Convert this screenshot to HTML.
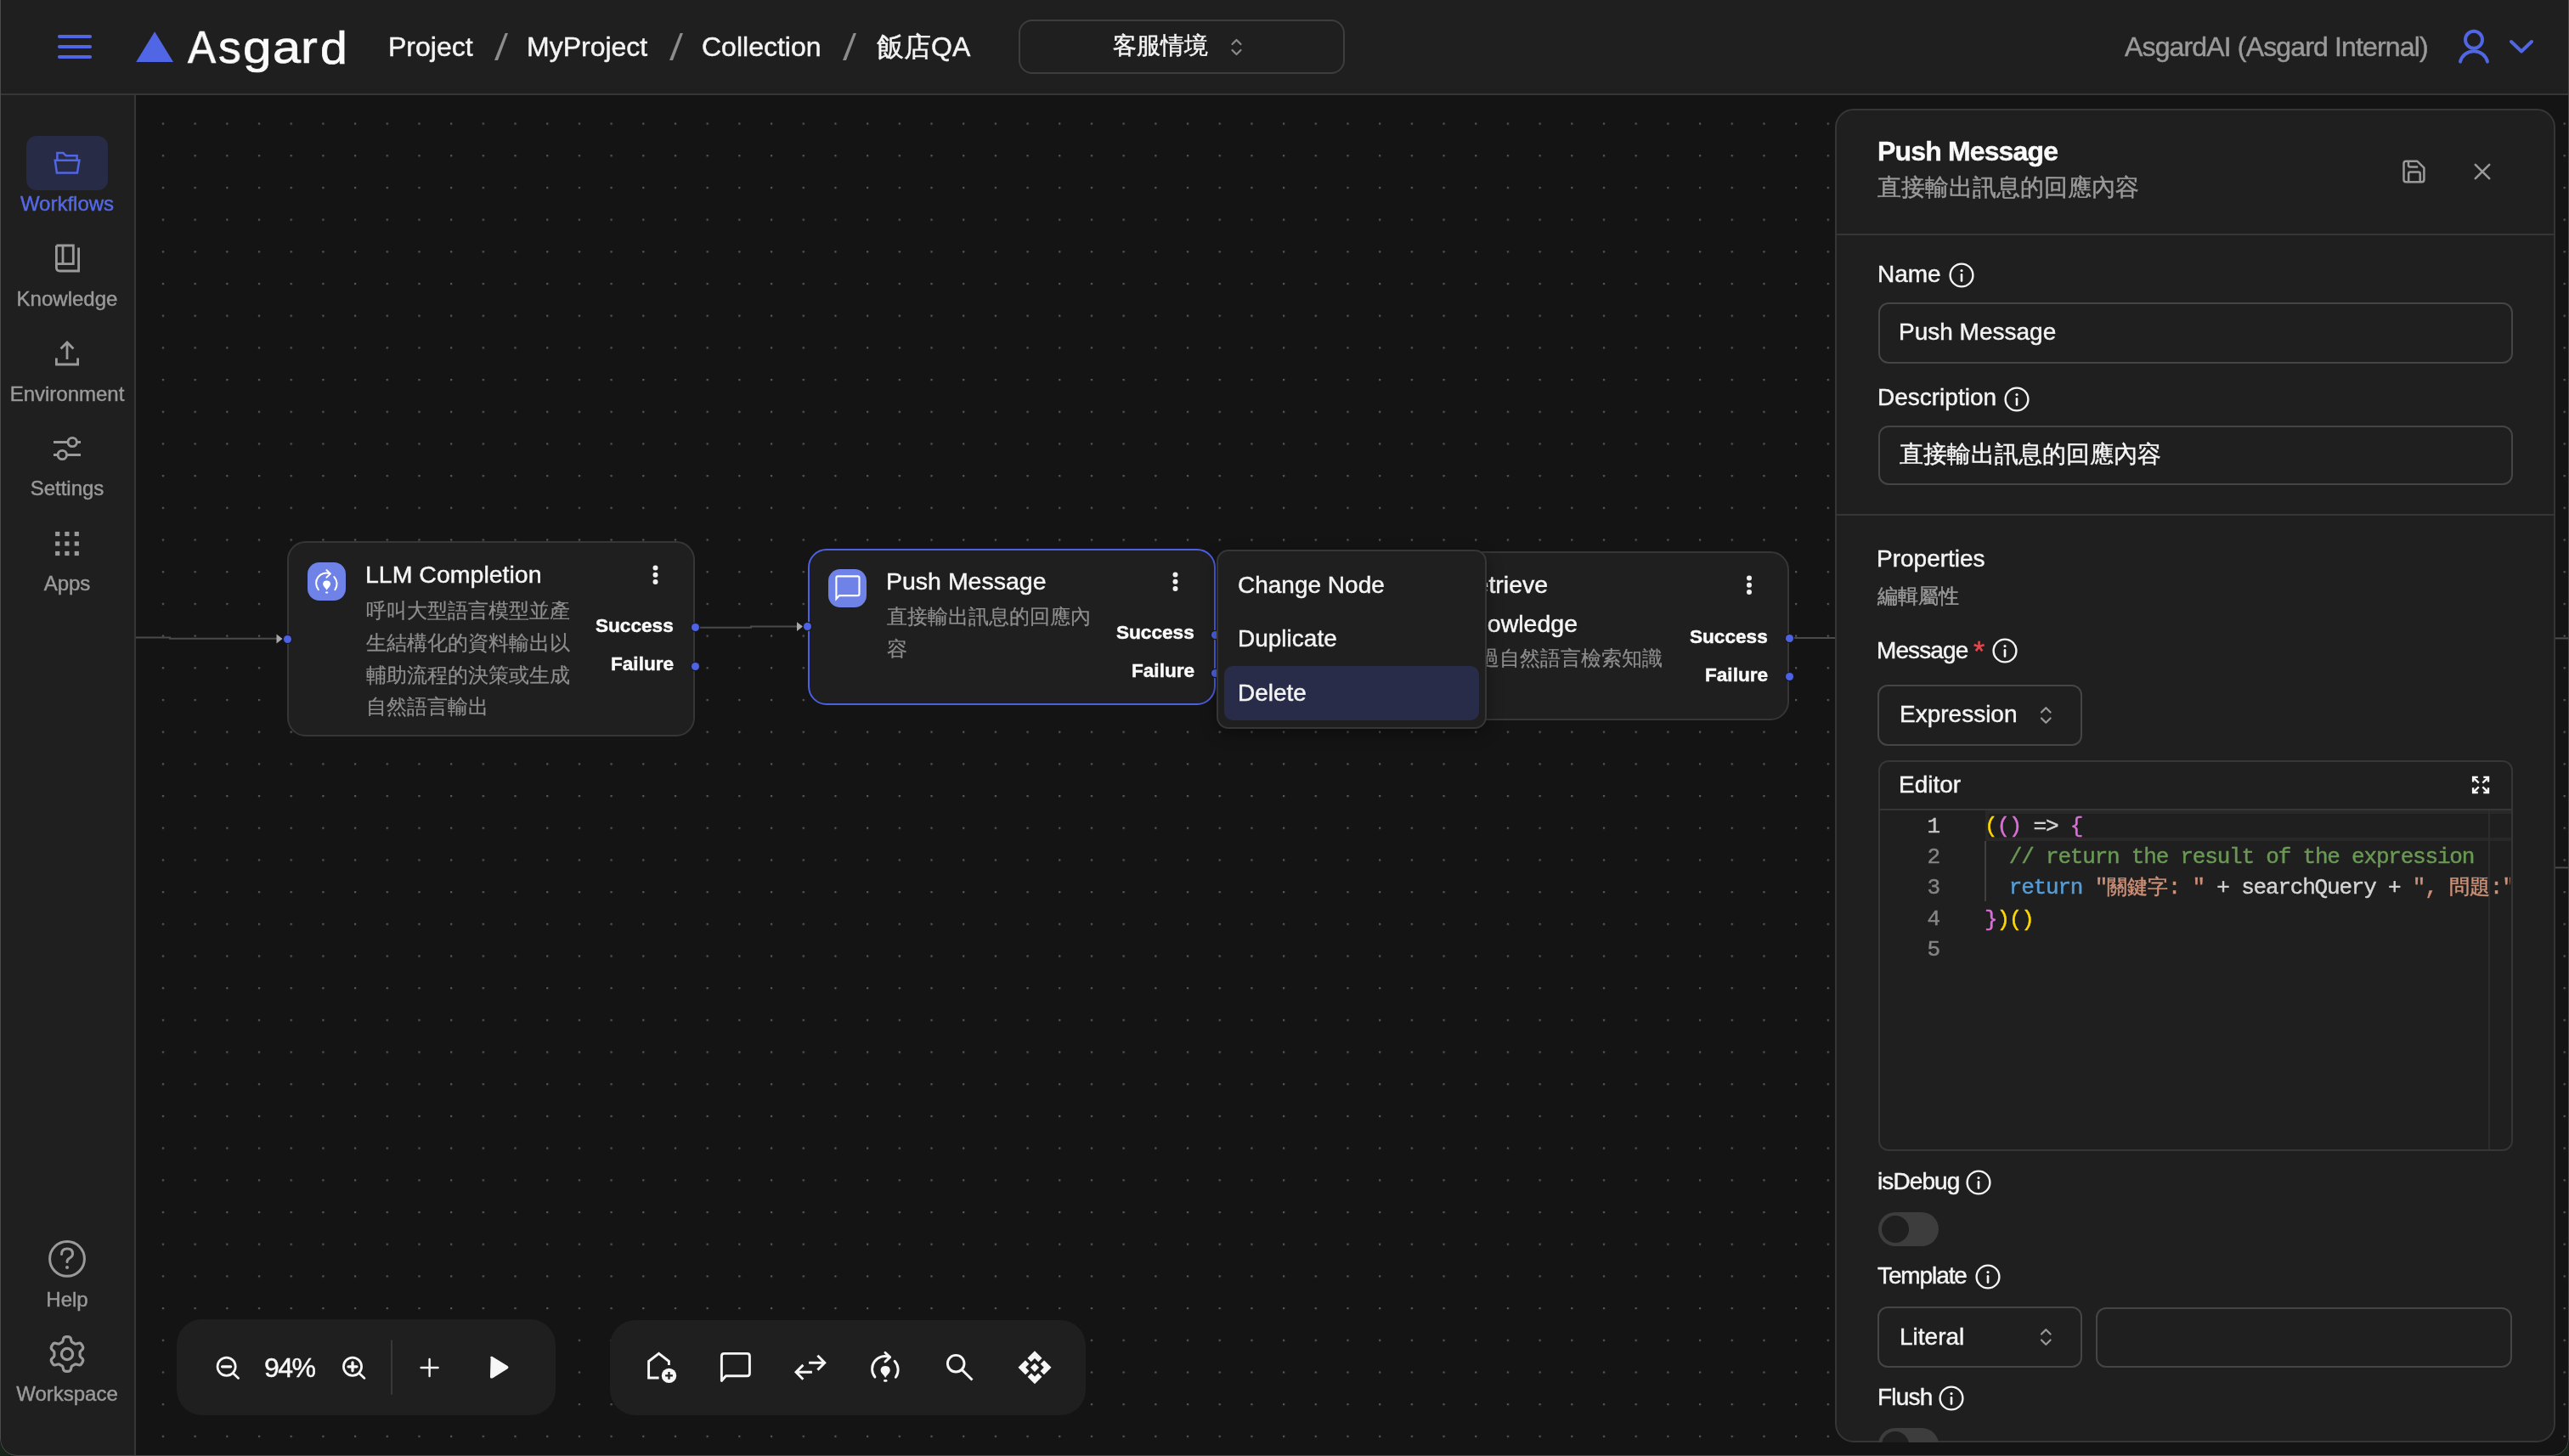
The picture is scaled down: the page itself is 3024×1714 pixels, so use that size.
<!DOCTYPE html>
<html><head><meta charset="utf-8">
<style>
html,body{margin:0;padding:0;width:3024px;height:1714px;overflow:hidden;background:#16241a;}
body{font-family:"Liberation Sans",sans-serif;color:#f4f4f4;-webkit-text-stroke:0.45px currentColor;}
#win{position:absolute;left:0;top:0;width:3024px;height:1714px;overflow:hidden;background:#141414;border-radius:0 0 20px 20px;}
#frame{position:absolute;left:0;top:-4px;width:3024px;height:1718px;box-sizing:border-box;border:1.6px solid #4a4a4a;border-top:none;border-radius:0 0 20px 20px;pointer-events:none;}
.a{position:absolute;}
.t{position:absolute;white-space:nowrap;line-height:1;will-change:transform;}
svg{position:absolute;overflow:visible;}
.hdr{left:0;top:0;width:3024px;height:110px;background:#1f1f1f;border-bottom:2px solid #363636;}
.side{left:0;top:112px;width:158px;height:1602px;background:#1f1f1f;border-right:2px solid #363636;}
.sl{font-size:24px;color:#9a9a9a;width:158px;text-align:center;left:0;}
.node{position:absolute;background:#1f1f1f;border:2px solid #363636;border-radius:22px;box-sizing:border-box;}
.nicon{position:absolute;width:46px;height:46px;border-radius:13px;background:#6b7fe6;}
.ntitle{font-size:28.5px;color:#f6f6f6;}
.ndesc{font-size:24.44px;color:#8e8e8e;line-height:37.8px;-webkit-text-stroke:0.2px #8e8e8e;}
.nout{font-size:22.6px;font-weight:bold;color:#fafafa;text-align:right;}
.hd{position:absolute;width:9px;height:9px;border-radius:50%;background:#4d62e4;box-shadow:0 0 0 1.2px #1a1a1a;}
.lbl{font-size:28px;color:#f4f4f4;}
.inp{position:absolute;box-sizing:border-box;border:2px solid #454545;border-radius:12px;background:#1f1f1f;}
.cj{font-size:24px;letter-spacing:-0.1px;}
.code{font-family:"Liberation Mono",monospace;font-size:26px;letter-spacing:-1.2px;line-height:1;will-change:transform;}
</style></head><body>
<div id="win">

<!-- canvas dots -->
<svg class="a" style="left:0;top:0" width="3024" height="1714">
<defs><pattern id="dots" x="2.4" y="31.43" width="37.69" height="37.69" patternUnits="userSpaceOnUse"><rect x="0" y="0" width="2.2" height="2.2" fill="#575757"/></pattern></defs>
<rect x="160" y="112" width="2864" height="1602" fill="url(#dots)"/>
</svg>

<!-- HEADER -->
<div class="a hdr"></div>
<svg style="left:0;top:0" width="420" height="110">
  <g stroke="#5166e4" stroke-width="4.2" stroke-linecap="round">
    <line x1="70" y1="43" x2="106" y2="43"/><line x1="70" y1="55" x2="106" y2="55"/><line x1="70" y1="67" x2="106" y2="67"/>
  </g>
  <polygon points="182.1,37.3 204,72.9 160.2,72.9" fill="#5166e4"/>
</svg>
<div class="t" style="left:221.2px;top:28px;font-size:54px;color:#fafafa;transform:scaleX(0.92);transform-origin:0 0;-webkit-text-stroke:0.7px #fafafa;">A</div><div class="t" style="left:256.5px;top:28px;font-size:54px;color:#fafafa;transform:scaleX(0.99);transform-origin:0 0;-webkit-text-stroke:0.7px #fafafa;">s</div><div class="t" style="left:285.6px;top:28px;font-size:54px;color:#fafafa;transform:scaleX(1.12);transform-origin:0 0;-webkit-text-stroke:0.7px #fafafa;">g</div><div class="t" style="left:321.2px;top:28px;font-size:54px;color:#fafafa;transform:scaleX(1.1);transform-origin:0 0;-webkit-text-stroke:0.7px #fafafa;">a</div><div class="t" style="left:354px;top:28px;font-size:54px;color:#fafafa;transform:scaleX(1.1);transform-origin:0 0;-webkit-text-stroke:0.7px #fafafa;">r</div><div class="t" style="left:376.7px;top:29.5px;font-size:53px;color:#fafafa;transform:scaleX(1.08);transform-origin:0 0;-webkit-text-stroke:0.7px #fafafa;">d</div>

<div class="t" style="left:457px;top:39px;font-size:32px;">Project</div>

<div class="t" style="left:620px;top:39px;font-size:32px;">MyProject</div>
<svg style="left:0;top:0" width="1100" height="100"><polygon points="594.6,39.1 598,39.1 586,70.9 582,70.9" fill="#8c8c8c"/><polygon points="800.6,39.1 804,39.1 792,70.9 788,70.9" fill="#8c8c8c"/><polygon points="1004.6,39.1 1008,39.1 996,70.9 992,70.9" fill="#8c8c8c"/></svg>

<div class="t" style="left:826px;top:39px;font-size:32px;">Collection</div>

<div class="t" style="left:1032px;top:39px;font-size:32px;">飯店QA</div>

<div class="inp" style="left:1199px;top:23px;width:384px;height:64px;border-radius:16px;border-color:#3d3d3d;"></div>
<div class="t" style="left:1310px;top:40px;font-size:28px;">客服情境</div>
<svg style="left:1449px;top:45px" width="13" height="21"><path d="M1.5 7 L6.5 2 L11.5 7 M1.5 14 L6.5 19 L11.5 14" fill="none" stroke="#8a8a8a" stroke-width="2.2" stroke-linecap="round" stroke-linejoin="round"/></svg>

<div class="t" style="left:2500.5px;top:39px;font-size:32px;color:#9a9a9a;letter-spacing:-0.85px;">AsgardAI (Asgard Internal)</div>
<svg style="left:2880px;top:20px" width="120" height="70">
  <g fill="none" stroke="#5166e4" stroke-width="4" stroke-linecap="round">
    <circle cx="32" cy="26.8" r="10"/>
    <path d="M16 52.6 A16.5 16.5 0 0 1 48 52.6" />
    <path d="M76 29 L88 40.5 L100 29" stroke-linejoin="round"/>
  </g>
</svg>

<!-- SIDEBAR -->
<div class="a side"></div>
<div class="a" style="left:31px;top:160px;width:96px;height:64px;border-radius:12px;background:#272b45;"></div>
<div class="t sl" style="top:227.6px;color:#5468e7;">Workflows</div>
<div class="t sl" style="top:339.7px;">Knowledge</div>
<div class="t sl" style="top:451.5px;">Environment</div>
<div class="t sl" style="top:562.7px;">Settings</div>
<div class="t sl" style="top:675.3px;">Apps</div>
<div class="t sl" style="top:1518.4px;">Help</div>
<div class="t sl" style="top:1629.3px;">Workspace</div>

<!-- sidebar icons -->
<svg style="left:0;top:150px" width="158" height="560">
 <g fill="none" stroke="#5166e4" stroke-width="2.5" stroke-linejoin="miter">
  <path d="M67.4 38.7 V30 H74.4 L77.6 33.2 H90.6 V38.7"/>
  <path d="M64.8 38.7 H93.4 L90.9 53.4 H66.9 Z"/>
 </g>
 <g fill="none" stroke="#9a9a9a" stroke-width="2.8">
  <path d="M66.4 139 H86.3 V160.6 H66.4 M74 139.5 V160"/>
  <path d="M66.4 139 V165 Q66.4 169 70.4 169 H92.6 V141.5"/>
  <path d="M79 253.5 V273 M71.6 260.5 L79 253 L86.4 260.5"/>
  <path d="M66.4 271.5 V279 H91.6 V271.5"/>
  <path d="M63 370.5 H95 M63 385.5 H95"/>
 </g>
 <g fill="#1f1f1f" stroke="#9a9a9a" stroke-width="2.8">
  <circle cx="85.2" cy="370.5" r="5.2"/>
  <circle cx="73.3" cy="385.5" r="5.2"/>
 </g>
 <g fill="#9a9a9a">
  <rect x="65.1" y="475.9" width="5.2" height="5.2"/><rect x="76.3" y="475.9" width="5.2" height="5.2"/><rect x="87.7" y="475.9" width="5.2" height="5.2"/>
  <rect x="65.1" y="487.4" width="5.2" height="5.2"/><rect x="76.3" y="487.4" width="5.2" height="5.2"/><rect x="87.7" y="487.4" width="5.2" height="5.2"/>
  <rect x="65.1" y="498.9" width="5.2" height="5.2"/><rect x="76.3" y="498.9" width="5.2" height="5.2"/><rect x="87.7" y="498.9" width="5.2" height="5.2"/>
 </g>
</svg>
<svg style="left:0;top:1440px" width="158" height="200">
 <g fill="none" stroke="#9a9a9a" stroke-width="3">
  <circle cx="79" cy="41.9" r="20.4"/>
  <path d="M72.5 36.5 Q72.5 30 79.2 30 Q85.5 30 85.5 35.8 Q85.5 39.5 81.5 41.3 Q79 42.6 79 45.5" stroke-linecap="round"/>
  <path transform="translate(79 154)" d="M0.00 -20.43 L1.07 -20.39 L2.13 -20.24 L3.15 -19.87 L4.03 -18.95 L4.59 -17.15 L4.98 -15.33 L5.51 -14.36 L6.16 -13.84 L6.85 -13.44 L7.53 -13.05 L8.21 -12.65 L8.91 -12.26 L9.68 -11.96 L10.79 -11.98 L12.55 -12.55 L14.40 -12.97 L15.63 -12.66 L16.46 -11.96 L17.12 -11.12 L17.70 -10.22 L18.19 -9.27 L18.59 -8.28 L18.78 -7.21 L18.43 -5.99 L17.15 -4.59 L15.77 -3.35 L15.20 -2.41 L15.07 -1.58 L15.06 -0.79 L15.07 0.00 L15.06 0.79 L15.07 1.58 L15.20 2.41 L15.77 3.35 L17.15 4.59 L18.43 5.99 L18.78 7.21 L18.59 8.28 L18.19 9.27 L17.70 10.22 L17.12 11.12 L16.46 11.96 L15.63 12.66 L14.40 12.97 L12.55 12.55 L10.79 11.98 L9.68 11.96 L8.91 12.26 L8.21 12.65 L7.53 13.05 L6.85 13.44 L6.16 13.84 L5.51 14.36 L4.98 15.33 L4.59 17.15 L4.03 18.95 L3.15 19.87 L2.13 20.24 L1.07 20.39 L0.00 20.43 L-1.07 20.39 L-2.13 20.24 L-3.15 19.87 L-4.03 18.95 L-4.59 17.15 L-4.98 15.33 L-5.51 14.36 L-6.16 13.84 L-6.85 13.44 L-7.53 13.05 L-8.21 12.65 L-8.91 12.26 L-9.68 11.96 L-10.79 11.98 L-12.55 12.55 L-14.40 12.97 L-15.63 12.66 L-16.46 11.96 L-17.12 11.12 L-17.70 10.22 L-18.19 9.27 L-18.59 8.28 L-18.78 7.21 L-18.43 5.99 L-17.15 4.59 L-15.77 3.35 L-15.20 2.41 L-15.07 1.58 L-15.06 0.79 L-15.07 0.00 L-15.06 -0.79 L-15.07 -1.58 L-15.20 -2.41 L-15.77 -3.35 L-17.15 -4.59 L-18.43 -5.99 L-18.78 -7.21 L-18.59 -8.28 L-18.19 -9.27 L-17.70 -10.22 L-17.12 -11.12 L-16.46 -11.96 L-15.63 -12.66 L-14.40 -12.97 L-12.55 -12.55 L-10.79 -11.98 L-9.68 -11.96 L-8.91 -12.26 L-8.21 -12.65 L-7.53 -13.05 L-6.85 -13.44 L-6.16 -13.84 L-5.51 -14.36 L-4.98 -15.33 L-4.59 -17.15 L-4.03 -18.95 L-3.15 -19.87 L-2.13 -20.24 L-1.07 -20.39Z" stroke-width="3.2" stroke-linejoin="round"/>
  <circle cx="79" cy="154" r="6.6" stroke-width="3.2"/>
 </g>
 <circle cx="79" cy="52" r="2" fill="#9a9a9a"/>
</svg>

<!-- EDGES -->
<svg style="left:0;top:0" width="3024" height="1714">
 <g fill="none" stroke="#4a4a4a" stroke-width="2">
  <path d="M160 750.6 H200 V751.8 H330"/>
  <path d="M818 738.8 H884 V737.6 H944"/>
  <path d="M2106 751 H2170"/>
  <path d="M3000 751.4 H3024"/>
  <path d="M3000 1021.4 H3024"/>
 </g>
 <polygon points="325.5,746.6 332.5,752 325.5,757.4" fill="#a8a8a8"/>
 <polygon points="938,732.3 945,737.6 938,743" fill="#a8a8a8"/>
</svg>

<!-- LLM node -->
<div class="node" style="left:338px;top:637px;width:480px;height:229.5px;"></div>
<div class="nicon" style="left:362.4px;top:661.6px;width:45px;height:45px;border-radius:14px;background:#6f82e8;"></div>
<svg style="left:362.4px;top:661.6px" width="45" height="45">
 <g fill="none" stroke="#fff" stroke-width="2" stroke-linecap="round" stroke-linejoin="round">
  <path d="M12.8 32.1 A12 12 0 0 1 26.6 13.4"/>
  <path d="M22.4 9.1 L26.9 13.4 L22.4 17.7"/>
  <path d="M31.3 17.1 A12 12 0 0 1 32.3 32.3"/>
  <path d="M22 35.6 H23.3"/>
 </g>
 <path d="M22.6 21.6 C26.2 21.6 27.2 24 27 26 C26.8 28.5 23.6 30.4 22.6 32.8 C21.6 30.4 18.4 28.5 18.2 26 C18 24 19 21.6 22.6 21.6 Z" fill="#fff"/>
</svg>
<div class="t ntitle" style="left:430px;top:661.5px;">LLM Completion</div>
<div class="t ndesc" style="left:430.5px;top:699.5px;">呼叫大型語言模型並產<br>生結構化的資料輸出以<br>輔助流程的決策或生成<br>自然語言輸出</div>
<div class="t nout" style="right:2231px;top:726px;">Success</div>
<div class="t nout" style="right:2231px;top:771px;">Failure</div>
<svg style="left:765px;top:660px" width="14" height="32"><g fill="#f0f0f0"><circle cx="6.5" cy="8.5" r="3"/><circle cx="6.5" cy="16.8" r="3"/><circle cx="6.5" cy="25.1" r="3"/></g></svg>
<div class="hd" style="left:333.5px;top:747.5px;"></div>
<div class="hd" style="left:814px;top:734.3px;"></div>
<div class="hd" style="left:814px;top:779.5px;"></div>

<!-- Retrieve knowledge node (behind menu) -->
<div class="node" style="left:1624px;top:649.4px;width:482px;height:199px;"></div>
<div class="t ntitle" style="left:1716px;top:664.5px;line-height:46px;">Retrieve<br>Knowledge</div>
<div class="t ndesc" style="left:1717px;top:756px;">透過自然語言檢索知識</div>
<div class="t nout" style="right:943px;top:738.5px;">Success</div>
<div class="t nout" style="right:943px;top:783.5px;">Failure</div>
<svg style="left:2052px;top:672px" width="14" height="32"><g fill="#f0f0f0"><circle cx="7" cy="8.5" r="3"/><circle cx="7" cy="16.8" r="3"/><circle cx="7" cy="25.1" r="3"/></g></svg>
<div class="hd" style="left:2101.9px;top:746.5px;"></div>
<div class="hd" style="left:2101.9px;top:791.8px;"></div>

<!-- Push Message node (selected) -->
<div class="node" style="left:951px;top:646px;width:479.5px;height:183.5px;border-color:#4b60e2;"></div>
<div class="nicon" style="left:975.2px;top:669.8px;width:45px;height:45px;border-radius:14px;background:#6f82e8;"></div>
<svg style="left:975.2px;top:669.8px" width="45" height="45">
 <path d="M9.4 35 V10.2 Q9.4 8.4 11.2 8.4 H34.6 Q36.5 8.4 36.5 10.2 V29.3 Q36.5 31.1 34.6 31.1 H13 Z" fill="none" stroke="#fff" stroke-width="2.1" stroke-linejoin="miter"/>
</svg>
<div class="t ntitle" style="left:1043px;top:670px;">Push Message</div>
<div class="t ndesc" style="left:1043.5px;top:707px;">直接輸出訊息的回應內<br>容</div>
<div class="t nout" style="right:1618px;top:734px;">Success</div>
<div class="t nout" style="right:1618px;top:779px;">Failure</div>
<svg style="left:1377px;top:668px" width="14" height="32"><g fill="#f0f0f0"><circle cx="6.5" cy="8.5" r="3"/><circle cx="6.5" cy="16.8" r="3"/><circle cx="6.5" cy="25.1" r="3"/></g></svg>
<div class="hd" style="left:946px;top:733px;"></div>
<div class="hd" style="left:1425.5px;top:742.8px;"></div>
<div class="hd" style="left:1425.5px;top:787.6px;"></div>

<!-- context menu -->
<div class="a" style="left:1431.5px;top:646.8px;width:318.5px;height:211px;box-sizing:border-box;border:2px solid #363636;border-radius:14px;background:#1f1f1f;box-shadow:0 6px 18px rgba(0,0,0,0.35);"></div>
<div class="a" style="left:1441px;top:783.8px;width:299.6px;height:63.8px;border-radius:10px;background:#282c48;"></div>
<div class="t lbl" style="left:1456.5px;top:674.5px;">Change Node</div>
<div class="t lbl" style="left:1456.5px;top:738.3px;">Duplicate</div>
<div class="t lbl" style="left:1456.5px;top:802.3px;">Delete</div>

<!-- TOOLBAR 1 -->
<div class="a" style="left:208px;top:1553px;width:446px;height:113px;border-radius:30px;background:#1f1f1f;"></div>
<svg style="left:208px;top:1553px" width="446" height="113">
 <g fill="none" stroke="#f6f6f6" stroke-width="2.7" stroke-linecap="round">
  <circle cx="58.6" cy="55.8" r="10.6"/><path d="M66.8 64 L72.6 69.4"/>
  <circle cx="207" cy="55.8" r="10.6"/><path d="M215.2 64 L221 69.4"/>
  <path d="M53.6 55.8 H63.6 M202 55.8 H212 M207 50.8 V60.8" stroke-width="3.3"/>
  <path d="M287.6 57 H307.6 M297.6 47 V67" stroke-width="2.4"/>
 </g>
 <path d="M253 24.6 V88.8" stroke="#383838" stroke-width="2"/>
 <path d="M370.6 46 Q369.5 44 371.5 45 L388.6 55.5 Q390.4 56.6 388.6 57.7 L371.5 68.3 Q369.5 69.3 370 67 Z" fill="#f6f6f6" stroke="#f6f6f6" stroke-width="2" stroke-linejoin="round"/>
</svg>
<div class="t" style="left:311px;top:1594px;font-size:32px;color:#f8f8f8;letter-spacing:-1.6px;">94%</div>

<!-- TOOLBAR 2 -->
<div class="a" style="left:718px;top:1554px;width:560px;height:112px;border-radius:30px;background:#1f1f1f;"></div>
<svg style="left:0;top:0" width="1300" height="1714">
 <g fill="none" stroke="#f6f6f6" stroke-width="2.9" stroke-linejoin="miter" stroke-linecap="butt">
  <path d="M775.6 1622 H763.6 V1602.5 L775.5 1593.3 L787.4 1602.5 V1607"/>
  <path d="M849.4 1625.5 V1596.4 Q849.4 1593.4 852.4 1593.4 H879.4 Q882.4 1593.4 882.4 1596.4 V1616.7 Q882.4 1619.7 879.4 1619.7 H854.4 Z" stroke-linejoin="round"/>
  <path d="M952.1 1604.2 H971 M962.4 1595.8 L970.8 1604.2 L962.4 1612.6 M955.9 1615.3 H937 M945.4 1606.9 L937 1615.3 L945.4 1623.7"/>
  <circle cx="1125.2" cy="1605.2" r="9.8"/><path d="M1132.4 1612.6 L1144.5 1624.5"/>
 </g>
 <circle cx="787.5" cy="1619.4" r="8.7" fill="#f6f6f6"/>
 <path d="M787.5 1615 V1623.8 M783.1 1619.4 H791.9" stroke="#1f1f1f" stroke-width="2.3"/>
 <g transform="translate(1013.95 1580.9) scale(1.25)">
  <g fill="none" stroke="#f6f6f6" stroke-width="2.3" stroke-linecap="round" stroke-linejoin="round">
   <path d="M12.8 32.1 A12 12 0 0 1 26.6 13.4"/>
   <path d="M22.4 9.1 L26.9 13.4 L22.4 17.7"/>
   <path d="M31.3 17.1 A12 12 0 0 1 32.3 32.3"/>
   <path d="M22 35.6 H23.3"/>
  </g>
  <path d="M22.6 21.6 C26.2 21.6 27.2 24 27 26 C26.8 28.5 23.6 30.4 22.6 32.8 C21.6 30.4 18.4 28.5 18.2 26 C18 24 19 21.6 22.6 21.6 Z" fill="#f6f6f6"/>
 </g>
 <g transform="translate(1218 1609.8) rotate(45)">
  <rect x="-13.8" y="-13.8" width="27.6" height="27.6" fill="#f6f6f6"/>
  <rect x="-7.6" y="-7.6" width="15.2" height="15.2" fill="#1f1f1f"/>
  <rect x="-1.75" y="-15" width="3.5" height="30" fill="#1f1f1f"/>
  <rect x="-15" y="-1.75" width="30" height="3.5" fill="#1f1f1f"/>
  <rect x="-3.6" y="-3.6" width="7.2" height="7.2" fill="#f6f6f6"/>
 </g>
</svg>

<!-- PANEL -->
<div class="a" style="left:2160px;top:128px;width:848px;height:1570px;box-sizing:border-box;border:2px solid #363636;border-radius:22px;background:#1f1f1f;overflow:hidden;">
 <div class="a" style="left:0;top:144.5px;width:848px;height:2px;background:#363636;"></div>
 <div class="a" style="left:0;top:475px;width:848px;height:2px;background:#363636;"></div>
</div>
<div class="t" style="left:2209.5px;top:162.4px;font-size:32px;font-weight:bold;color:#fafafa;letter-spacing:-0.85px;">Push Message</div>
<div class="t" style="left:2210px;top:207px;font-size:28px;color:#9a9a9a;">直接輸出訊息的回應內容</div>
<svg style="left:2810px;top:175px" width="140" height="55">
 <g fill="none" stroke="#9a9a9a" stroke-width="2.5" stroke-linejoin="round">
  <path d="M22.2 14.8 H35.5 L43.4 22.7 V36.5 Q43.4 39.2 40.7 39.2 H22.2 Q19.5 39.2 19.5 36.5 V17.5 Q19.5 14.8 22.2 14.8 Z"/>
  <path d="M25 15.2 V19.5 Q25 21.4 26.9 21.4 H36.2"/>
  <path d="M25.2 38.6 V29.4 Q25.2 27.5 27.1 27.5 H36.8 Q38.7 27.5 38.7 29.4 V38.6"/>
 </g>
 <path d="M103.8 18.8 L120.2 35.2 M120.2 18.8 L103.8 35.2" stroke="#9a9a9a" stroke-width="2.6" stroke-linecap="round"/>
</svg>

<div class="t lbl" style="left:2209.5px;top:309.3px;">Name</div>
<svg style="left:2293px;top:308px" width="32" height="32"><circle cx="16" cy="16" r="13.4" fill="none" stroke="#f4f4f4" stroke-width="2.4"/><path d="M16 15.2 V22.6" stroke="#f4f4f4" stroke-width="2.6" stroke-linecap="round"/><circle cx="16" cy="10.6" r="1.6" fill="#f4f4f4"/></svg>
<div class="inp" style="left:2210.5px;top:356px;width:747px;height:71.5px;"></div>
<div class="t lbl" style="left:2235px;top:377.3px;">Push Message</div>

<div class="t lbl" style="left:2209.5px;top:454.3px;">Description</div>
<svg style="left:2357.8px;top:454px" width="32" height="32"><circle cx="16" cy="16" r="13.4" fill="none" stroke="#f4f4f4" stroke-width="2.4"/><path d="M16 15.2 V22.6" stroke="#f4f4f4" stroke-width="2.6" stroke-linecap="round"/><circle cx="16" cy="10.6" r="1.6" fill="#f4f4f4"/></svg>
<div class="inp" style="left:2210.5px;top:500.5px;width:747px;height:70.5px;"></div>
<div class="t lbl" style="left:2236px;top:521px;">直接輸出訊息的回應內容</div>

<div class="t lbl" style="left:2208.5px;top:643.7px;">Properties</div>
<div class="t" style="left:2209.5px;top:689.5px;font-size:24px;color:#9a9a9a;">編輯屬性</div>

<div class="t lbl" style="left:2208.5px;top:752.3px;letter-spacing:-0.9px;">Message</div>
<div class="t" style="left:2322.5px;top:749px;font-size:34px;color:#e5484d;">*</div>
<svg style="left:2344px;top:750px" width="32" height="32"><circle cx="16" cy="16" r="13.4" fill="none" stroke="#f4f4f4" stroke-width="2.4"/><path d="M16 15.2 V22.6" stroke="#f4f4f4" stroke-width="2.6" stroke-linecap="round"/><circle cx="16" cy="10.6" r="1.6" fill="#f4f4f4"/></svg>
<div class="inp" style="left:2210px;top:806px;width:240.5px;height:72px;"></div>
<div class="t lbl" style="left:2236px;top:827.3px;">Expression</div>
<svg style="left:2400.5px;top:830.5px" width="15" height="22"><path d="M2 7.5 L7.3 2.2 L12.6 7.5 M2 14.5 L7.3 19.8 L12.6 14.5" fill="none" stroke="#9a9a9a" stroke-width="2.2" stroke-linecap="round" stroke-linejoin="round"/></svg>

<div class="inp" style="left:2210.5px;top:895px;width:747px;height:460px;border-color:#363636;overflow:hidden;">
 <div class="a" style="left:0;top:55px;width:747px;height:2px;background:#363636;"></div>
 <div class="a" style="left:124px;top:57.4px;width:622px;height:35.2px;box-sizing:border-box;border:4px solid #282828;border-right:none;"></div>
 <div class="a" style="left:123.5px;top:93.3px;width:2px;height:71px;background:#404040;"></div>
 <div class="a" style="left:716.5px;top:57px;width:2px;height:403px;background:#2c2c2c;"></div>
</div>
<div class="t lbl" style="left:2235px;top:910px;">Editor</div>
<svg style="left:2900px;top:905px" width="40" height="40">
 <g fill="none" stroke="#f6f6f6" stroke-width="2.4" stroke-linecap="butt" stroke-linejoin="miter">
  <path d="M11.1 15.6 V9.9 H16.8 M12.3 11.3 L17.8 16.6"/>
  <path d="M29 15.6 V9.9 H23.3 M27.8 11.3 L22.3 16.6"/>
  <path d="M11.1 22.3 V28 H16.8 M12.3 26.6 L17.8 21.3"/>
  <path d="M29 22.3 V28 H23.3 M27.8 26.6 L22.3 21.3"/>
 </g>
</svg>
<div class="code a" style="left:2243px;top:954.5px;width:40px;text-align:right;color:#858585;line-height:36.17px;"><span style="color:#c6c6c6">1</span><br>2<br>3<br>4<br>5</div>
<div class="code a" style="left:2336px;top:954.5px;width:619px;overflow:hidden;white-space:pre;line-height:36.17px;color:#d4d4d4;"><span style="color:#ffd700">(</span><span style="color:#da70d6">()</span> =&gt; <span style="color:#da70d6">{</span>
  <span style="color:#6a9955">// return the result of the expression</span>
  <span style="color:#569cd6">return</span> <span style="color:#ce9178">"<span class="cj">關鍵字</span>: "</span> + searchQuery + <span style="color:#ce9178">", <span class="cj">問題</span>:"</span>
<span style="color:#da70d6">}</span><span style="color:#ffd700">)()</span>
</div>

<div class="t lbl" style="left:2209.5px;top:1377px;letter-spacing:-0.9px;">isDebug</div>
<svg style="left:2313px;top:1375.8px" width="32" height="32"><circle cx="16" cy="16" r="13.4" fill="none" stroke="#f4f4f4" stroke-width="2.4"/><path d="M16 15.2 V22.6" stroke="#f4f4f4" stroke-width="2.6" stroke-linecap="round"/><circle cx="16" cy="10.6" r="1.6" fill="#f4f4f4"/></svg>
<div class="a" style="left:2210.5px;top:1427px;width:71.5px;height:40px;border-radius:20px;background:#3d3d3d;"></div>
<div class="a" style="left:2214.5px;top:1431px;width:32px;height:32px;border-radius:50%;background:#1f1f1f;"></div>

<div class="t lbl" style="left:2209.5px;top:1487.5px;letter-spacing:-1.1px;">Template</div>
<svg style="left:2324px;top:1486.8px" width="32" height="32"><circle cx="16" cy="16" r="13.4" fill="none" stroke="#f4f4f4" stroke-width="2.4"/><path d="M16 15.2 V22.6" stroke="#f4f4f4" stroke-width="2.6" stroke-linecap="round"/><circle cx="16" cy="10.6" r="1.6" fill="#f4f4f4"/></svg>
<div class="inp" style="left:2210px;top:1538px;width:240.5px;height:72px;"></div>
<div class="t lbl" style="left:2235.5px;top:1560px;">Literal</div>
<svg style="left:2400.5px;top:1563px" width="15" height="22"><path d="M2 7.5 L7.3 2.2 L12.6 7.5 M2 14.5 L7.3 19.8 L12.6 14.5" fill="none" stroke="#9a9a9a" stroke-width="2.2" stroke-linecap="round" stroke-linejoin="round"/></svg>
<div class="inp" style="left:2467px;top:1538.5px;width:490px;height:71px;"></div>

<div class="t lbl" style="left:2209.5px;top:1630.9px;letter-spacing:-0.8px;">Flush</div>
<svg style="left:2281.3px;top:1630px" width="32" height="32"><circle cx="16" cy="16" r="13.4" fill="none" stroke="#f4f4f4" stroke-width="2.4"/><path d="M16 15.2 V22.6" stroke="#f4f4f4" stroke-width="2.6" stroke-linecap="round"/><circle cx="16" cy="10.6" r="1.6" fill="#f4f4f4"/></svg>
<div class="a" style="left:2160px;top:1600px;width:848px;height:98px;overflow:hidden;">
 <div class="a" style="left:50.5px;top:81px;width:71.5px;height:40px;border-radius:20px;background:#3d3d3d;"></div>
 <div class="a" style="left:54.5px;top:85px;width:32px;height:32px;border-radius:50%;background:#1f1f1f;"></div>
</div>

<div id="frame"></div>
</div>
</body></html>
